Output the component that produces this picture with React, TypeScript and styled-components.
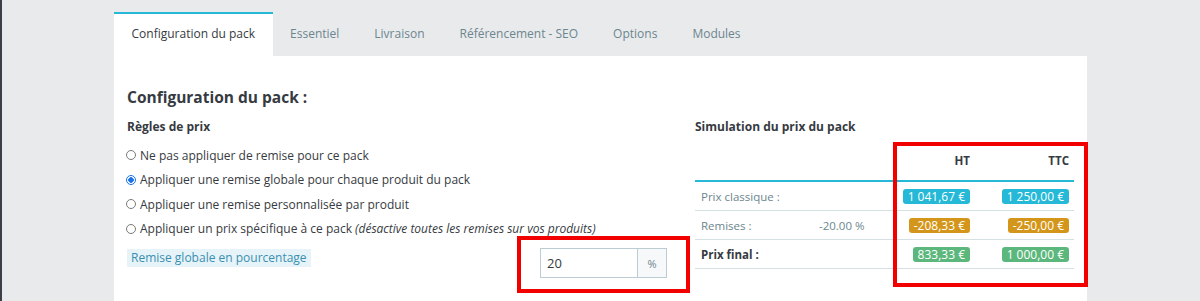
import styled, { createGlobalStyle } from 'styled-components';

const GlobalStyle = createGlobalStyle`
  html, body {
    margin: 0;
    padding: 0;
    height: 301px;
    overflow: hidden;
    background: #e9eaec;
    font-family: 'Open Sans', 'Noto Sans', sans-serif;
    color: #363a41;
  }
`;

const Page = styled.div`
  display: flex;
  height: 301px;
`;

const Strip = styled.div`
  width: 2px;
  flex: none;
  background: #3b4046;
`;

const Main = styled.div`
  flex: 1;
  padding: 12px 0 0 112px;
`;

const TabBar = styled.nav`
  display: flex;
  width: 973px;
`;

const Tab = styled.div<{ $active?: boolean }>`
  height: 44px;
  box-sizing: border-box;
  padding: 0 17.5px 3px;
  display: flex;
  align-items: center;
  font-size: 12px;
  border-top: 2px solid ${(p) => (p.$active ? '#25b9d7' : 'transparent')};
  background: ${(p) => (p.$active ? '#fff' : 'transparent')};
  color: ${(p) => (p.$active ? '#363a41' : '#6c868e')};
  white-space: nowrap;
`;

const Panel = styled.section`
  width: 973px;
  height: 260px;
  background: #fff;
  padding: 31px 13px 0;
  box-sizing: border-box;
`;

const Title = styled.h2`
  margin: 0 0 11px;
  font-size: 15.5px;
  line-height: 20px;
  font-weight: 700;
`;

const Columns = styled.div`
  display: grid;
  grid-template-columns: 540px 1fr;
  column-gap: 28px;
`;

const SubTitle = styled.h3`
  margin: 0;
  font-size: 12px;
  line-height: 18px;
  font-weight: 700;
`;

const RadioList = styled.div`
  margin-top: 7px;
  display: flex;
  flex-direction: column;
`;

const RadioRow = styled.label`
  height: 24.5px;
  display: flex;
  align-items: center;
  gap: 4px;
  font-size: 12px;
  color: #363a41;
  white-space: nowrap;

  em {
    font-style: italic;
  }
`;

const Radio = styled.input`
  appearance: none;
  margin: 0 0 0 -1px;
  width: 10px;
  height: 10px;
  border-radius: 50%;
  border: 1px solid #7a7a7a;
  background: #fff;

  &:checked {
    border-color: #1a73e8;
    background: radial-gradient(circle, #1a73e8 0 2.5px, #fff 3px);
  }
`;

const FieldRow = styled.div`
  margin-top: 7px;
  display: flex;
  justify-content: space-between;
  align-items: flex-start;
`;

const FieldLabel = styled.span`
  margin-top: 1px;
  padding: 0 4px;
  height: 18px;
  line-height: 18px;
  font-size: 12px;
  background: #e6f4f9;
  color: #3a8fb0;
`;

const InputGroup = styled.div`
  position: relative;
  display: flex;
  width: 127px;
  height: 30px;
`;

const TextInput = styled.input`
  width: 97px;
  box-sizing: border-box;
  border: 1px solid #bbcdd2;
  border-right: none;
  padding: 0 6px;
  font-family: inherit;
  font-size: 13px;
  color: #363a41;
  outline: none;
`;

const Addon = styled.span`
  flex: 1;
  border: 1px solid #bbcdd2;
  background: #f6f8f9;
  color: #6c868e;
  font-size: 11px;
  display: flex;
  align-items: center;
  justify-content: center;
`;

const Highlight = styled.div<{ $t: number; $r: number; $b: number; $l: number }>`
  position: absolute;
  top: ${(p) => p.$t}px;
  right: ${(p) => p.$r}px;
  bottom: ${(p) => p.$b}px;
  left: ${(p) => p.$l}px;
  border: 4px solid #f20000;
  pointer-events: none;
`;

const TableWrap = styled.div`
  position: relative;
  margin-top: 5px;
`;

const Table = styled.table`
  width: 100%;
  border-collapse: collapse;
  font-size: 11.5px;
  table-layout: fixed;
`;

const Th = styled.th<{ $w?: number }>`
  box-sizing: border-box;
  width: ${(p) => (p.$w ? `${p.$w}px` : 'auto')};
  height: 40px;
  padding: 0 5px 0 0;
  text-align: right;
  font-weight: 700;
  color: #363a41;
  border-bottom: 2px solid #25b9d7;
`;

const Td = styled.td<{ $align?: 'left' | 'right'; $strong?: boolean; $inset?: number }>`
  height: 28px;
  padding: 0 5px 0 ${(p) => p.$inset ?? 6}px;
  text-align: ${(p) => p.$align ?? 'left'};
  color: ${(p) => (p.$strong ? '#363a41' : '#6c868e')};
  font-weight: ${(p) => (p.$strong ? 700 : 400)};
  border-bottom: 1px solid #d5e0e3;
  white-space: nowrap;
`;

const badgeColors = {
  info: '#25b9d7',
  warning: '#d4961a',
  success: '#5bb77c',
};

const Badge = styled.span<{ $tone: keyof typeof badgeColors }>`
  display: inline-block;
  padding: 0 5px;
  height: 15px;
  line-height: 15px;
  border-radius: 3px;
  background: ${(p) => badgeColors[p.$tone]};
  color: #fff;
  font-size: 12px;
`;

const tabs = [
  'Configuration du pack',
  'Essentiel',
  'Livraison',
  'Référencement - SEO',
  'Options',
  'Modules',
];

const rules = [
  { text: 'Ne pas appliquer de remise pour ce pack' },
  { text: 'Appliquer une remise globale pour chaque produit du pack', checked: true },
  { text: 'Appliquer une remise personnalisée par produit' },
  {
    text: 'Appliquer un prix spécifique à ce pack ',
    note: '(désactive toutes les remises sur vos produits)',
  },
];

const rows: {
  label: string;
  extra?: string;
  ht: string;
  ttc: string;
  tone: keyof typeof badgeColors;
  strong?: boolean;
}[] = [
  { label: 'Prix classique :', ht: '1 041,67 €', ttc: '1 250,00 €', tone: 'info' },
  { label: 'Remises :', extra: '-20.00 %', ht: '-208,33 €', ttc: '-250,00 €', tone: 'warning' },
  { label: 'Prix final :', ht: '833,33 €', ttc: '1 000,00 €', tone: 'success', strong: true },
];

export default function App() {
  return (
    <>
      <GlobalStyle />
      <Page>
        <Strip />
        <Main>
          <TabBar>
            {tabs.map((t, i) => (
              <Tab key={t} $active={i === 0}>
                {t}
              </Tab>
            ))}
          </TabBar>
          <Panel>
            <Title>Configuration du pack :</Title>
            <Columns>
              <div>
                <SubTitle>Règles de prix</SubTitle>
                <RadioList>
                  {rules.map((r) => (
                    <RadioRow key={r.text}>
                      <Radio type="radio" name="rule" defaultChecked={r.checked} />
                      <span>
                        {r.text}
                        {r.note ? <em>{r.note}</em> : null}
                      </span>
                    </RadioRow>
                  ))}
                </RadioList>
                <FieldRow>
                  <FieldLabel>Remise globale en pourcentage</FieldLabel>
                  <InputGroup>
                    <TextInput defaultValue="20" />
                    <Addon>%</Addon>
                    <Highlight $t={-12} $r={-23} $b={-15} $l={-23} />
                  </InputGroup>
                </FieldRow>
              </div>
              <div>
                <SubTitle>Simulation du prix du pack</SubTitle>
                <TableWrap>
                  <Table>
                    <thead>
                      <tr>
                        <Th $w={115} />
                        <Th $w={83} />
                        <Th $w={82}>HT</Th>
                        <Th>TTC</Th>
                      </tr>
                    </thead>
                    <tbody>
                      {rows.map((r) => (
                        <tr key={r.label}>
                          <Td $strong={r.strong}>{r.label}</Td>
                          <Td $inset={9}>{r.extra ?? ''}</Td>
                          <Td $align="right">
                            <Badge $tone={r.tone}>{r.ht}</Badge>
                          </Td>
                          <Td $align="right">
                            <Badge $tone={r.tone}>{r.ttc}</Badge>
                          </Td>
                        </tr>
                      ))}
                    </tbody>
                  </Table>
                  <Highlight $t={1} $r={-14} $b={-18} $l={198} />
                </TableWrap>
              </div>
            </Columns>
          </Panel>
        </Main>
      </Page>
    </>
  );
}
